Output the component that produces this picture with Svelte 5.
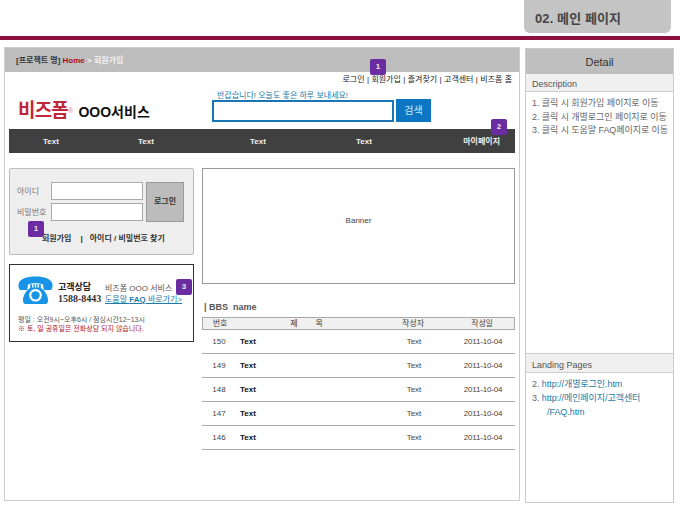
<script>
    const descriptions = [
        '1. 클릭 시 회원가입 페이지로 이동',
        '2. 클릭 시 개별로그인 페이지로 이동',
        '3. 클릭 시 도움말 FAQ페이지로 이동'
    ];
    const utilLinks = ['로그인', '회원가입', '즐겨찾기', '고객센터', '비즈폼 홈'];
    const navItems = ['Text', 'Text', 'Text', 'Text', '마이페이지'];
    const posts = [150, 149, 148, 147, 146];
</script>

<div class="page">
    <div class="top">
        <div class="tab">02. 메인 페이지</div>
    </div>
    <div class="rule"></div>

    <div class="columns">
        <section class="main">
            <header class="crumb">
                <span>[프로젝트 명]</span> <b class="home">Home</b> <span class="path">&gt; 회원가입</span>
            </header>

            <div class="util">
                {#each utilLinks as link, i}
                    {#if i > 0}<i>|</i>{/if}<span>{link}</span>
                {/each}
                <span class="badge b-util">1</span>
            </div>

            <div class="brand-row">
                <div class="logo">
                    <span class="logo-mark">비즈폼</span><sup>®</sup>
                    <span class="logo-name">OOO서비스</span>
                </div>
                <div class="search">
                    <p>반갑습니다! 오늘도 좋은 하루 보내세요!</p>
                    <div class="search-row">
                        <div class="search-input"></div>
                        <div class="search-btn">검색</div>
                    </div>
                </div>
            </div>

            <nav class="nav">
                {#each navItems as item}
                    <span>{item}</span>
                {/each}
                <span class="badge b-nav">2</span>
            </nav>

            <div class="body">
                <div class="left">
                    <div class="login">
                        <div class="login-form">
                            <div class="labels">
                                <span>아이디</span>
                                <span>비밀번호</span>
                            </div>
                            <div class="inputs">
                                <div class="field"></div>
                                <div class="field"></div>
                            </div>
                            <div class="login-btn">로그인</div>
                        </div>
                        <div class="login-links">
                            <span>회원가입</span>
                            <span class="sep">|</span>
                            <span>아이디 / 비밀번호 찾기</span>
                        </div>
                        <span class="badge b-login">1</span>
                    </div>

                    <div class="contact">
                        <div class="contact-top">
                            <svg class="phone" viewBox="0 0 36 29" width="35" height="28">
                                <path fill="#1794e6" d="M18 .5C9 .5 2 3 .5 8 0 11 1 14 2 14.500h7c1-1 1-4.500 1-5.500 2-1 5-1.500 8-1.500s6 .5 8 1.500c0 1 0 4.500 1 5.500h7c1-.5 2-3.500 1.500-6.500C34 3 27 .5 18 .5z"/>
                                <path fill="#1794e6" d="M12.500 8.500h11v4C28 15 31 21 31 25c0 3-1.500 4-3 4H8c-1.500 0-3-1-3-4 0-4 3-10 7.500-12.500z"/>
                                <circle cx="18" cy="20" r="6.500" fill="#fff"/>
                                <circle cx="18" cy="20" r="4.300" fill="#1794e6"/>
                                <rect x="14.500" y="8.500" width="1.400" height="3.500" fill="#fff"/>
                                <rect x="17.300" y="8.500" width="1.400" height="3.500" fill="#fff"/>
                                <rect x="20.100" y="8.500" width="1.400" height="3.500" fill="#fff"/>
                            </svg>
                            <div class="tel">
                                <b>고객상담</b>
                                <b class="tel-no">1588-8443</b>
                            </div>
                            <div class="help">
                                <span>비즈폼 OOO 서비스</span>
                                <span class="help-link">도움말 <b>FAQ</b> 바로가기&gt;</span>
                            </div>
                        </div>
                        <div class="hours">
                            <span>평일 : 오전9시~오후6시 / 점심시간12~13시</span>
                            <span class="warn">※ 토, 일 공휴일은 전화상담 되지 않습니다.</span>
                        </div>
                        <span class="badge b-contact">3</span>
                    </div>
                </div>

                <div class="right">
                    <div class="banner">Banner</div>
                    <h3 class="bbs">| BBS &nbsp;name</h3>
                    <div class="row head">
                        <span class="c-no">번호</span>
                        <span class="c-title center">제 &nbsp; &nbsp; &nbsp; &nbsp;목</span>
                        <span class="c-author">작성자</span>
                        <span class="c-date">작성일</span>
                    </div>
                    {#each posts as no}
                        <div class="row post">
                            <span class="c-no">{no}</span>
                            <b class="c-title">Text</b>
                            <span class="c-author">Text</span>
                            <span class="c-date">2011-10-04</span>
                        </div>
                    {/each}
                </div>
            </div>
        </section>

        <aside class="detail">
            <h2>Detail</h2>
            <div class="sub">Description</div>
            <ul class="desc">
                {#each descriptions as line}
                    <li>{line}</li>
                {/each}
            </ul>
            <div class="sub landing">Landing Pages</div>
            <ul class="pages">
                <li>2. <span>http://개별로그인.htm</span></li>
                <li>3. <span>http://메인페이지/고객센터</span></li>
                <li class="indent"><span>/FAQ.htm</span></li>
            </ul>
        </aside>
    </div>
</div>

<style>
    :global(body) {
        background: #fff;
    }

    .page {
        width: 680px;
        height: 510px;
        overflow: hidden;
        font-family: "Liberation Sans", "Noto Sans CJK KR", sans-serif;
        font-size: 8px;
        color: #333;
    }

    .top {
        display: flex;
        justify-content: flex-end;
        height: 36px;
        padding-right: 9px;
    }

    .tab {
        width: 147px;
        height: 33px;
        box-sizing: border-box;
        padding: 12px 0 0 11px;
        background: #c4c4c4;
        border-radius: 0 0 6px 6px;
        font-size: 13px;
        font-weight: 700;
        line-height: 14px;
        letter-spacing: 0.1px;
        color: #444;
    }

    .rule {
        height: 4px;
        margin-bottom: 7px;
        background: #8c103c;
    }

    .columns {
        display: flex;
        align-items: flex-start;
        gap: 5px;
        padding-left: 4px;
    }

    .main {
        position: relative;
        width: 516px;
        height: 454px;
        box-sizing: border-box;
        border: 1px solid #ccc;
    }

    .crumb {
        height: 24px;
        padding-left: 11px;
        background: #bdbdbd;
        font-size: 8px;
        line-height: 26px;
        font-weight: 700;
        color: #333;
    }

    .home {
        color: #b00a1e;
    }

    .path {
        color: #f2f2f2;
    }

    .util {
        position: relative;
        display: flex;
        justify-content: flex-end;
        gap: 2.4px;
        height: 16px;
        padding-right: 7px;
        line-height: 16px;
        color: #222;
    }

    .util i {
        font-style: normal;
    }

    .brand-row {
        display: flex;
        height: 34px;
        padding-left: 13px;
    }

    .logo {
        width: 194px;
        padding-top: 11px;
        line-height: 24px;
        white-space: nowrap;
    }

    .logo-mark {
        font-size: 19px;
        font-weight: 700;
        color: #c0283c;
        letter-spacing: -0.800px;
    }

    .logo sup {
        font-size: 7px;
        color: #d0808a;
    }

    .logo-name {
        margin-left: 3px;
        font-size: 14px;
        font-weight: 700;
        color: #111;
    }

    .search p {
        margin: 1px 0 0 5px;
        height: 10px;
        line-height: 14px;
        color: #1d7aa5;
    }

    .search-row {
        display: flex;
        gap: 2px;
    }

    .search-input {
        width: 182px;
        height: 22px;
        box-sizing: border-box;
        margin-top: 1px;
        border: 2px solid #1b75b5;
        background: #fff;
    }

    .search-btn {
        width: 35px;
        height: 23px;
        background: #0d76c2;
        color: #cfe6f5;
        font-size: 10px;
        line-height: 23px;
        text-align: center;
    }

    .nav {
        position: relative;
        display: grid;
        grid-template-columns: 84px 106px 118px 94px 1fr;
        height: 24px;
        margin: 7px 4px 0 4px;
        background: #404040;
        color: #f0f0f0;
        font-weight: 700;
        line-height: 25px;
    }

    .nav span:not(.badge) {
        text-align: center;
    }

    .nav span:nth-child(5) {
        text-align: right;
        padding-right: 15px;
    }

    .body {
        display: flex;
        gap: 8px;
        padding: 15px 4px 0 4px;
    }

    .left {
        width: 185px;
        display: flex;
        flex-direction: column;
        gap: 9px;
    }

    .login {
        position: relative;
        height: 87px;
        box-sizing: border-box;
        padding: 13px 0 0 7px;
        background: #eeeeee;
        border: 1px solid #bbb;
        border-radius: 2px;
    }

    .login-form {
        display: flex;
    }

    .labels {
        display: flex;
        flex-direction: column;
        gap: 11px;
        width: 34px;
        padding-top: 5px;
        color: #777;
        line-height: 10px;
    }

    .inputs {
        display: flex;
        flex-direction: column;
        gap: 3px;
    }

    .field {
        width: 92px;
        height: 18px;
        box-sizing: border-box;
        background: #fff;
        border: 1px solid #aaa;
    }

    .login-btn {
        width: 38px;
        height: 40px;
        box-sizing: border-box;
        margin-left: 3px;
        background: #bcbcbc;
        border: 1px solid #999;
        color: #333;
        font-weight: 700;
        line-height: 37px;
        text-align: center;
    }

    .login-links {
        display: flex;
        margin: 11px 0 0 25px;
        color: #333;
        font-weight: 700;
        line-height: 12px;
    }

    .sep {
        margin: 0 7px 0 9px;
    }

    .contact {
        position: relative;
        height: 78px;
        box-sizing: border-box;
        padding: 11px 0 0 8px;
        border: 1px solid #333;
    }

    .contact-top {
        display: flex;
        align-items: flex-start;
    }

    .tel {
        display: flex;
        flex-direction: column;
        width: 47px;
        margin: 6px 0 0 5px;
        font-size: 9px;
        line-height: 11px;
        color: #222;
    }

    .tel-no {
        font-family: "Liberation Serif", serif;
        font-size: 10px;
        color: #333;
    }

    .help {
        display: flex;
        flex-direction: column;
        margin-top: 8px;
        font-size: 8px;
        line-height: 10.500px;
        color: #555;
    }

    .help-link {
        color: #1c7aa8;
        text-decoration: underline;
        white-space: nowrap;
    }

    .hours {
        display: flex;
        flex-direction: column;
        margin-top: 11px;
        font-size: 7px;
        line-height: 8.500px;
        color: #555;
        white-space: nowrap;
    }

    .warn {
        color: #b0162c;
    }

    .right {
        flex: 1;
    }

    .banner {
        height: 116px;
        box-sizing: border-box;
        border: 1px solid #999;
        font-size: 8px;
        line-height: 104px;
        text-align: center;
        color: #444;
    }

    .bbs {
        margin: 0;
        padding: 17px 0 3px 2px;
        font-size: 9px;
        line-height: 13px;
        font-weight: 700;
        color: #555;
    }

    .row {
        display: grid;
        grid-template-columns: 37px 1fr 74px 64px;
        align-items: center;
        color: #444;
    }

    .row span {
        text-align: center;
    }

    .row span.c-no {
        padding-right: 3px;
    }

    .row span.c-date {
        letter-spacing: -0.200px;
    }

    .row.head {
        height: 13px;
        box-sizing: border-box;
        background: #f0f0f0;
        border: 1px solid #aaa;
        line-height: 12px;
    }

    .row.post {
        height: 24px;
        box-sizing: border-box;
        border-bottom: 1px solid #aaa;
    }

    .c-title {
        padding-left: 1px;
        color: #111;
    }

    span.c-title.center {
        padding-right: 4px;
        color: #333;
    }

    .badge {
        position: absolute;
        width: 16px;
        height: 16px;
        background: #6a2ca0;
        border-radius: 2px;
        color: #f0e8f5;
        font-size: 8px;
        font-weight: 700;
        line-height: 16px;
        text-align: center;
    }

    .b-util {
        top: -13px;
        right: 133px;
    }

    .b-nav {
        top: -10px;
        right: 8px;
    }

    .b-login {
        top: 52px;
        left: 18px;
    }

    .b-contact {
        top: 14px;
        right: 1px;
    }

    .detail {
        display: flex;
        flex-direction: column;
        width: 149px;
        height: 455px;
        box-sizing: border-box;
        margin-top: 1px;
        border: 1px solid #ccc;
    }

    .detail h2 {
        margin: 0;
        height: 25px;
        background: #bfbfbf;
        font-size: 11px;
        font-weight: 400;
        line-height: 27px;
        text-align: center;
        color: #333;
    }

    .sub {
        height: 18px;
        box-sizing: border-box;
        padding-left: 6px;
        background: #f0f0f0;
        border-bottom: 1px solid #ccc;
        font-size: 9px;
        line-height: 21px;
        color: #555;
    }

    .landing {
        flex: none;
        height: 20px;
        border-top: 1px solid #ccc;
        line-height: 22px;
    }

    .desc,
    .pages {
        margin: 0;
        list-style: none;
        font-size: 9px;
        letter-spacing: -0.060px;
        color: #666;
    }

    .desc {
        height: 261px;
        box-sizing: border-box;
        padding: 5px 0 0 6px;
        line-height: 13.500px;
    }

    .pages {
        padding: 4px 0 0 6px;
        line-height: 14px;
    }

    .pages span {
        color: #1d7aa5;
    }

    .indent {
        padding-left: 15px;
    }
</style>
